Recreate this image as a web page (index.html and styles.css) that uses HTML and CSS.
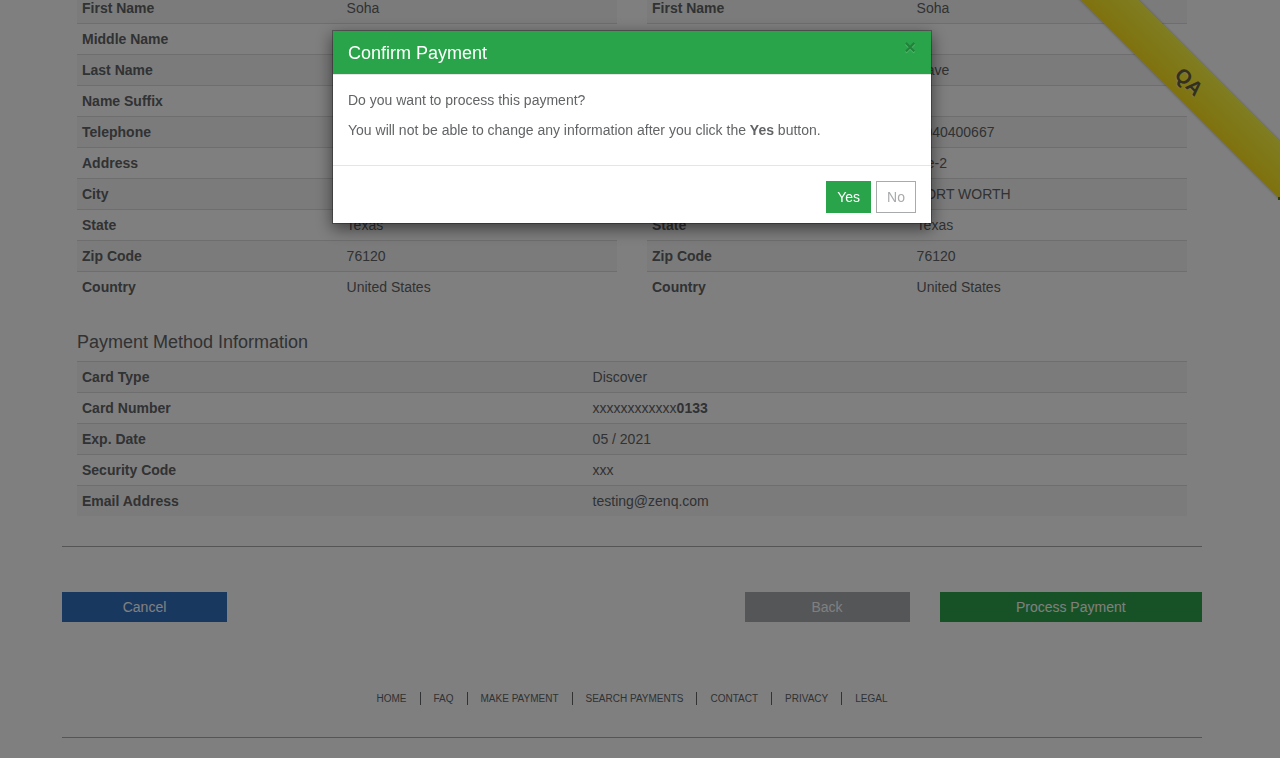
FILE: index.html
```html
<!DOCTYPE html>
<html lang="en">
<head>
<meta charset="utf-8">
<title>Confirm Payment</title>
<link rel="stylesheet" href="styles.css">
</head>
<body>
<div class="page">
  <main class="container">
    <div class="columns">
      <table class="info">
        <tr><th scope="row">First Name</th><td>Soha</td></tr>
        <tr><th scope="row">Middle Name</th><td></td></tr>
        <tr><th scope="row">Last Name</th><td>Dave</td></tr>
        <tr><th scope="row">Name Suffix</th><td></td></tr>
        <tr><th scope="row">Telephone</th><td>9040400667</td></tr>
        <tr><th scope="row">Address</th><td>we-2</td></tr>
        <tr><th scope="row">City</th><td>FORT WORTH</td></tr>
        <tr><th scope="row">State</th><td>Texas</td></tr>
        <tr><th scope="row">Zip Code</th><td>76120</td></tr>
        <tr><th scope="row">Country</th><td>United States</td></tr>
      </table>
      <table class="info">
        <tr><th scope="row">First Name</th><td>Soha</td></tr>
        <tr><th scope="row">Middle Name</th><td></td></tr>
        <tr><th scope="row">Last Name</th><td>Dave</td></tr>
        <tr><th scope="row">Name Suffix</th><td></td></tr>
        <tr><th scope="row">Telephone</th><td>9040400667</td></tr>
        <tr><th scope="row">Address</th><td>we-2</td></tr>
        <tr><th scope="row">City</th><td>FORT WORTH</td></tr>
        <tr><th scope="row">State</th><td>Texas</td></tr>
        <tr><th scope="row">Zip Code</th><td>76120</td></tr>
        <tr><th scope="row">Country</th><td>United States</td></tr>
      </table>
    </div>
    <section class="method">
      <h4 class="heading">Payment Method Information</h4>
      <table class="info info-wide">
        <tr><th scope="row">Card Type</th><td>Discover</td></tr>
        <tr><th scope="row">Card Number</th><td>xxxxxxxxxxxx<b>0133</b></td></tr>
        <tr><th scope="row">Exp. Date</th><td>05 / 2021</td></tr>
        <tr><th scope="row">Security Code</th><td>xxx</td></tr>
        <tr><th scope="row">Email Address</th><td>testing@zenq.com</td></tr>
      </table>
    </section>
    <hr class="rule">
    <div class="actions">
      <button type="button" class="action cancel">Cancel</button>
      <button type="button" class="action back">Back</button>
      <button type="button" class="action process">Process Payment</button>
    </div>
    <footer>
      <nav class="links">
        <a href="#">HOME</a>
        <a href="#">FAQ</a>
        <a href="#">MAKE PAYMENT</a>
        <a href="#">SEARCH PAYMENTS</a>
        <a href="#">CONTACT</a>
        <a href="#">PRIVACY</a>
        <a href="#">LEGAL</a>
      </nav>
      <hr class="rule">
    </footer>
  </main>
  <div class="ribbon-box">
    <div class="ribbon">QA</div>
    <span class="corner"></span>
  </div>
</div>
<div class="overlay">
  <div class="modal" role="dialog" aria-modal="true" aria-labelledby="title">
    <header class="modal-header">
      <h4 class="modal-title" id="title">Confirm Payment</h4>
      <button type="button" class="close" aria-label="Close">×</button>
    </header>
    <div class="modal-body">
      <p>Do you want to process this payment?</p>
      <p>You will not be able to change any information after you click the <b>Yes</b> button.</p>
    </div>
    <div class="modal-footer">
      <button type="button" class="btn yes">Yes</button>
      <button type="button" class="btn no">No</button>
    </div>
  </div>
</div>
</body>
</html>
```

FILE: styles.css
```css
* { box-sizing: border-box; }

body {
  margin: 0;
  height: 100vh;
  overflow: hidden;
  background: #fff;
  color: #626466;
  font: 14px/20px "Liberation Sans", Arial, sans-serif;
}

button { font: inherit; cursor: pointer; }

.page {
  position: relative;
  height: 100%;
  overflow: hidden;
  padding-right: 16px;
}

.container {
  max-width: 1140px;
  margin: -8px auto 0;
}

.columns {
  display: grid;
  grid-template-columns: 1fr 1fr;
  gap: 30px;
  padding: 0 15px;
}

.info {
  width: 100%;
  table-layout: fixed;
  border-spacing: 0;
}
.info th, .info td {
  height: 31px;
  padding: 5px;
  border-top: 1px solid #ddd;
  text-align: left;
}
.info th { width: 49%; }
.info-wide th { width: 46%; }
.info tr:nth-child(odd) { background: #f7f7f7; }

.method { padding: 30px 15px; }
.heading {
  margin: 0 0 9px;
  font-size: 18px;
  font-weight: 400;
  line-height: 20px;
}

.rule {
  margin: 0;
  border: 0;
  border-top: 1px solid #aaa;
}

.actions {
  display: grid;
  grid-template-columns: repeat(12, 1fr);
  column-gap: 30px;
  margin: 45px 0 70px;
}
.action {
  height: 30px;
  padding: 0;
  border: 0;
  color: #fff;
}
.cancel { grid-column: 1 / span 2; background: #3370be; }
.back { grid-column: 8 / span 2; background: #a8acb0; }
.process { grid-column: 10 / span 3; background: #2ca44c; }

.links {
  display: flex;
  justify-content: center;
  margin-bottom: 32px;
  font-size: 10px;
  line-height: 13px;
}
.links a {
  padding: 0 13px;
  color: #626466;
  text-decoration: none;
}
.links a + a { border-left: 1px solid #626466; }

.ribbon-box {
  position: absolute;
  top: 0;
  right: 0;
  width: 240px;
  height: 200px;
  overflow: hidden;
}
.ribbon {
  position: absolute;
  top: 60px;
  left: -50px;
  width: 400px;
  height: 41px;
  background: linear-gradient(#fffc44, #ffe41c);
  box-shadow: 0 0 3px rgba(0, 0, 0, .3);
  color: #666040;
  font-size: 20px;
  font-weight: 700;
  line-height: 44px;
  text-align: center;
  text-shadow: 0 1px 0 rgba(255, 255, 255, .5);
  transform: rotate(45deg);
}
.corner {
  position: absolute;
  right: 0;
  bottom: 0;
  width: 2px;
  height: 3px;
  background: #4c8020;
}

.overlay {
  position: fixed;
  inset: 0;
  padding: 30px 16px 30px 0;
  background: rgba(0, 0, 0, .5);
}

.modal {
  max-width: 600px;
  margin: 0 auto;
  border: 1px solid rgba(0, 0, 0, .3);
  background: #fff;
  background-clip: padding-box;
  box-shadow: 0 5px 15px rgba(0, 0, 0, .5);
}
.modal-header {
  display: flex;
  justify-content: space-between;
  align-items: flex-start;
  height: 44px;
  padding: 6px 15px;
  border-bottom: 1px solid #e5e5e5;
  background: #2aa44a;
  background-clip: padding-box;
}
.modal-title {
  margin: 0;
  color: #fff;
  font-size: 18px;
  font-weight: 400;
  line-height: 32px;
}
.close {
  padding: 0;
  border: 0;
  background: none;
  color: #000;
  font-size: 20px;
  font-weight: 700;
  line-height: 21px;
  text-shadow: 0 1px 0 #fff;
  opacity: .2;
}
.modal-body { padding: 15px; }
.modal-body p { margin: 0 0 10px; }
.modal-footer {
  display: flex;
  justify-content: flex-end;
  gap: 5px;
  padding: 15px 15px 10px;
  border-top: 1px solid #e5e5e5;
}
.btn {
  height: 32px;
  padding: 0 10px;
  border: 1px solid #2aa44a;
}
.yes { background: #2aa44a; color: #fff; }
.no { border-color: #a8aaac; background: #fff; color: #a8aaac; }
```
